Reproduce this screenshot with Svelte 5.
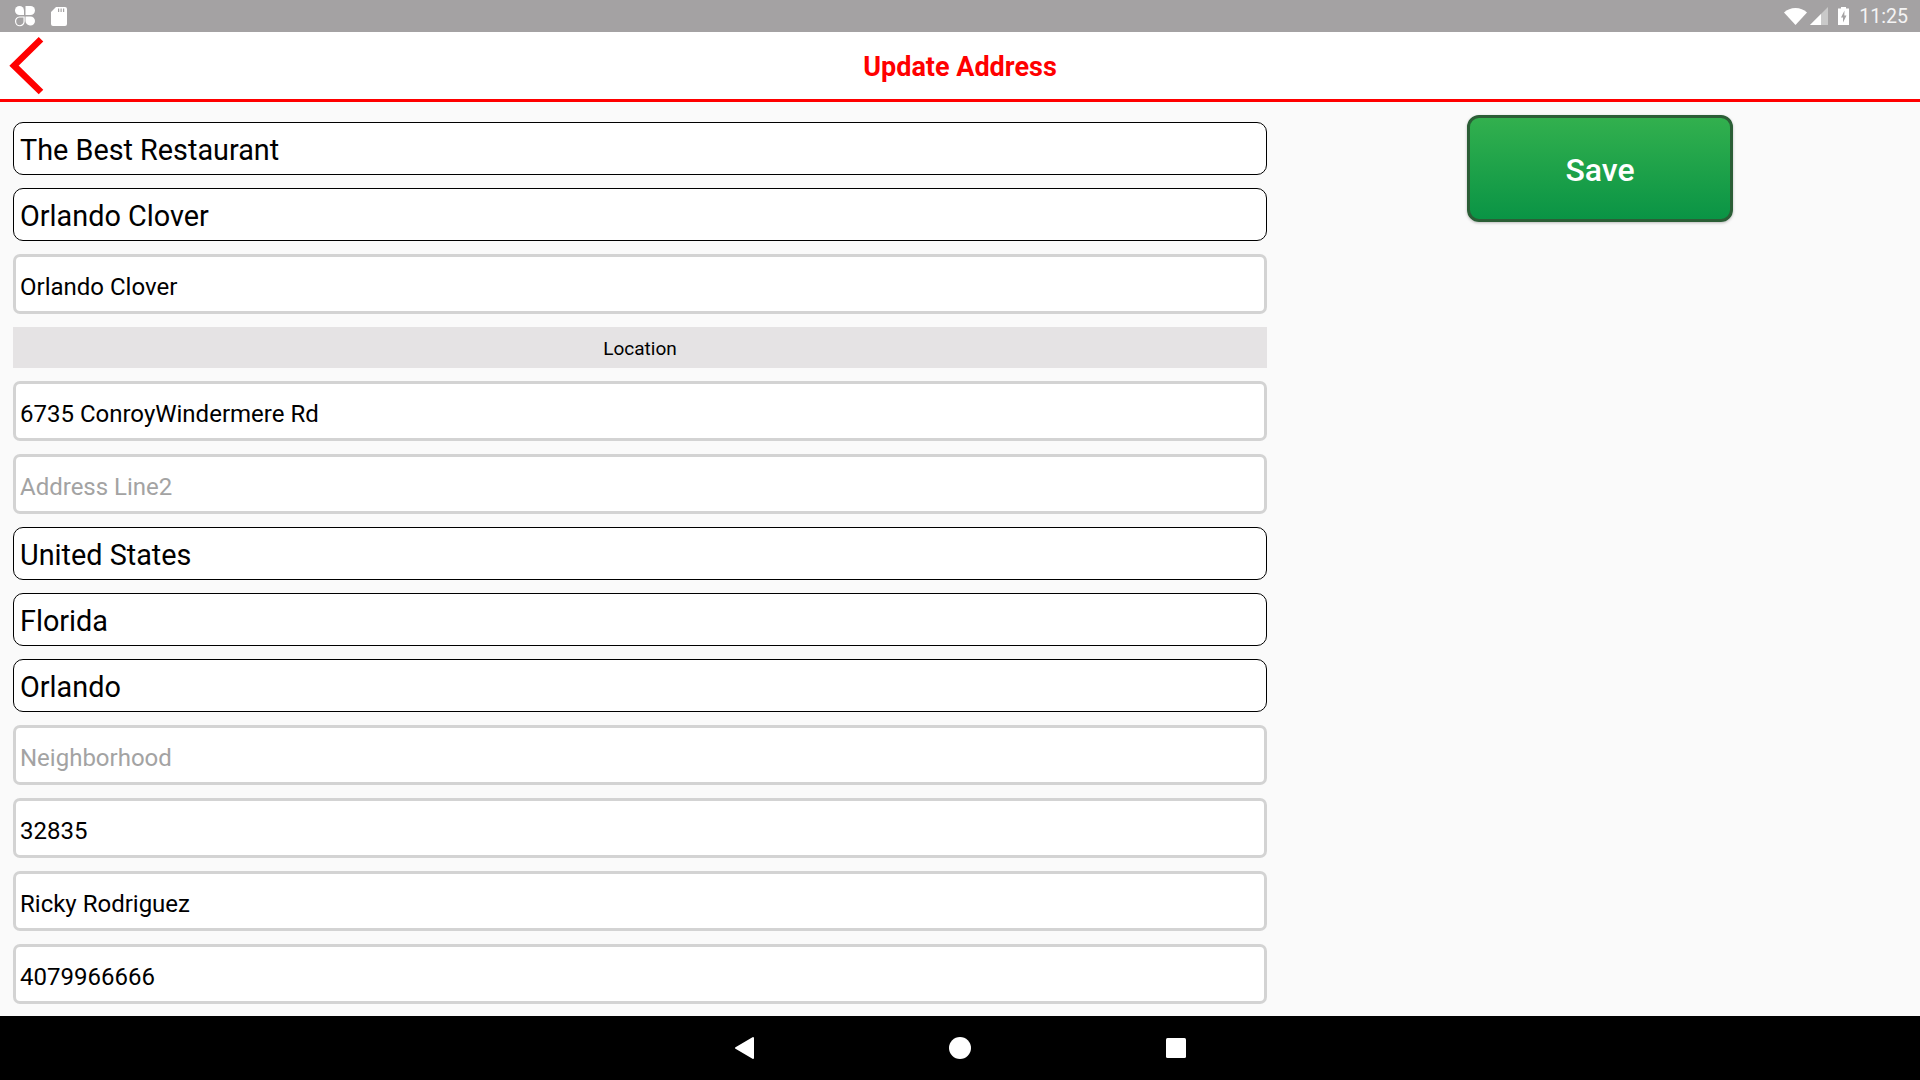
<script>
  const fields = [
    { v: 'The Best Restaurant', k: 'select' },
    { v: 'Orlando Clover', k: 'select' },
    { v: 'Orlando Clover', k: 'input' },
    { k: 'section', v: 'Location' },
    { v: '6735 ConroyWindermere Rd', k: 'input' },
    { p: 'Address Line2', v: '', k: 'input' },
    { v: 'United States', k: 'select' },
    { v: 'Florida', k: 'select' },
    { v: 'Orlando', k: 'select' },
    { p: 'Neighborhood', v: '', k: 'input' },
    { v: '32835', k: 'input' },
    { v: 'Ricky Rodriguez', k: 'input' },
    { v: '4079966666', k: 'input' }
  ];
</script>

<div class="screen">
  <div class="status">
    <div class="status-left">
      <svg width="22" height="22" viewBox="0 0 22 22">
        <path fill="#fff" d="M1 5.500a4.500 4.500 0 0 1 9 0V10H5.500A4.500 4.500 0 0 1 1 5.500Z"/>
        <path fill="#fff" d="M11.500 1h5a4.500 4.500 0 0 1 0 9h-5V5.500Z"/>
        <path fill="none" stroke="#fff" stroke-width="1.200" d="M1.600 16.500a4 4 0 0 1 4-4.500h4.500v4.500a4.200 4.200 0 0 1-8.500 0Z"/>
        <path fill="#fff" d="M11.500 11.500h5a4.500 4.500 0 0 1 0 9 4.500 4.500 0 0 1-5-4.500Z"/>
      </svg>
      <svg width="18" height="20" viewBox="0 0 18 20">
        <path fill="#fff" fill-rule="evenodd" d="M6 1h9a2 2 0 0 1 2 2v15a2 2 0 0 1-2 2H3a2 2 0 0 1-2-2V6ZM8 2.500v3.500h1.200V2.500ZM10.500 2.500v3.500h1.200V2.500ZM13 2.500v3.500h1.200V2.500Z"/>
      </svg>
    </div>
    <div class="status-right">
      <svg class="wifi" width="23" height="17" viewBox="0 0 26 19.200">
        <path fill="#fff" d="M0 5C3.500 2 8 0 13 0s9.500 2 13 5L13 19.200Z"/>
      </svg>
      <svg class="signal" width="18" height="18" viewBox="0 0 18 18">
        <path fill="#c9c9c9" d="M18 0v18H0Z"/>
        <path fill="#fff" d="M11 7v11H0Z"/>
      </svg>
      <svg class="battery" width="11" height="18" viewBox="0 0 11 18">
        <path fill="#fff" fill-rule="evenodd" d="M3 1.500V0h5v1.500h3V18H0V1.500Zm3.500 2L3 10.500h2V15.500L8.500 8.500H6.300Z"/>
      </svg>
      <span class="clock">11:25</span>
    </div>
  </div>

  <header class="top">
    <svg class="back" width="38" height="60" viewBox="0 0 38 60">
      <path fill="none" stroke="#f00" stroke-width="6.500" d="M34 3.300 7 29.700 34 56"/>
    </svg>
    <h1>Update Address</h1>
  </header>

  <main class="body">
    <form class="form">
      {#each fields as f}
        {#if f.k === 'section'}
          <div class="section">{f.v}</div>
        {:else}
          <input class={f.k} value={f.v} placeholder={f.p ?? ''} readonly />
        {/if}
      {/each}
    </form>
    <div class="side">
      <button type="button" class="save">Save</button>
    </div>
  </main>

  <nav class="nav">
    <svg width="19" height="24" viewBox="0 0 19 24"><path fill="#fff" stroke="#fff" stroke-width="2" stroke-linejoin="round" d="M18 2v20L1 12Z"/></svg>
    <svg width="22" height="22" viewBox="0 0 22 22"><circle cx="11" cy="11" r="11" fill="#fff"/></svg>
    <svg width="20" height="20" viewBox="0 0 20 20"><rect width="20" height="20" rx="1.500" fill="#fff"/></svg>
  </nav>
</div>

<style>
  :global(body) {
    margin: 0;
  }
  .screen {
    width: 1920px;
    height: 1080px;
    display: flex;
    flex-direction: column;
    background: #fafafa;
    font-family: Roboto, sans-serif;
    overflow: hidden;
  }
  .status {
    height: 32px;
    flex: none;
    background: #a4a2a3;
    display: flex;
    align-items: center;
    justify-content: space-between;
    padding: 0 12px 0 14px;
  }
  .status-left {
    display: flex;
    align-items: center;
    gap: 14px;
  }
  .status-right {
    display: flex;
    align-items: center;
    color: #fff;
  }
  .signal {
    margin-left: 3px;
  }
  .battery {
    margin-left: 10px;
  }
  .clock {
    margin-left: 10px;
    font-size: 19.600px;
    color: #f4f4f4;
  }
  .top {
    height: 70px;
    flex: none;
    box-sizing: border-box;
    background: #fff;
    border-bottom: 3px solid #f00;
    display: flex;
    align-items: center;
    justify-content: center;
    position: relative;
  }
  .back {
    position: absolute;
    left: 7px;
    top: 4px;
  }
  h1 {
    margin: 0;
    padding-top: 2px;
    color: #f00;
    font-size: 27px;
    font-weight: 700;
  }
  .body {
    flex: 1;
    min-height: 0;
    display: flex;
    align-items: flex-start;
  }
  .form {
    width: 1254px;
    margin: 20px 0 0 13px;
    display: flex;
    flex-direction: column;
    gap: 13px;
  }
  input {
    display: block;
    width: 100%;
    box-sizing: border-box;
    margin: 0;
    background: #fff;
    font-family: Roboto, sans-serif;
    color: #000;
    outline: none;
  }
  input::placeholder {
    color: #a3a3a3;
    opacity: 1;
  }
  .select {
    height: 53px;
    border: 1.500px solid #000;
    border-radius: 10px;
    padding: 2px 0 0 6px;
    font-size: 28.800px;
  }
  .input {
    height: 60px;
    border: 3px solid #d3d3d3;
    border-radius: 7px;
    padding: 6px 0 0 4px;
    font-size: 24px;
  }
  .section {
    height: 41px;
    padding-top: 2px;
    box-sizing: border-box;
    background: #e5e3e4;
    display: flex;
    align-items: center;
    justify-content: center;
    font-size: 19px;
    color: #000;
  }
  .side {
    margin: 13px 0 0 200px;
  }
  .save {
    display: block;
    width: 266px;
    height: 107px;
    box-sizing: border-box;
    border: 3px solid #2b5e36;
    border-radius: 12px;
    background: linear-gradient(#32b04e, #0a9445);
    color: #fff;
    font-family: Roboto, sans-serif;
    font-size: 32px;
    font-weight: 500;
    padding: 2px 0 0;
    box-shadow: 0 1px 3px rgba(0, 0, 0, 0.25);
  }
  .nav {
    height: 64px;
    flex: none;
    background: #000;
    display: flex;
    align-items: center;
    padding: 0 0 0 735px;
    gap: 195px;
  }
</style>
